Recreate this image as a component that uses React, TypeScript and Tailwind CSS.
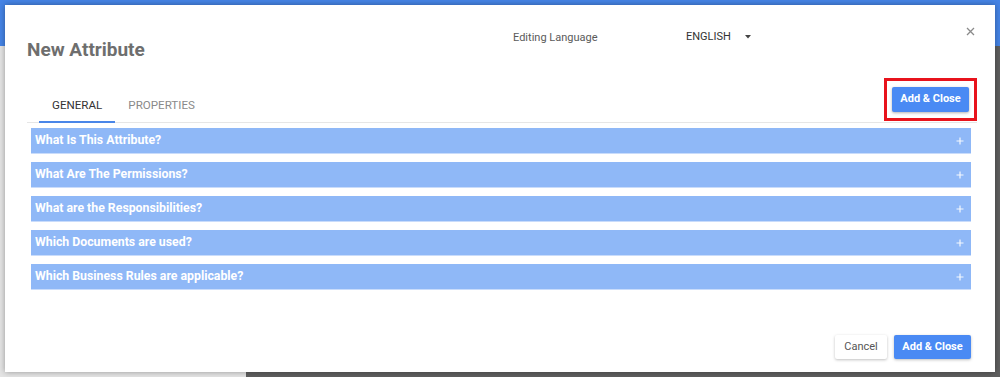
import React from "react";

const sections = [
  "What Is This Attribute?",
  "What Are The Permissions?",
  "What are the Responsibilities?",
  "Which Documents are used?",
  "Which Business Rules are applicable?",
];

const PlusIcon = () => (
  <svg width="8" height="8" viewBox="0 0 8 8" className="opacity-90">
    <path d="M4 0.5v7M0.5 4h7" stroke="#ffffff" strokeWidth="1.2" />
  </svg>
);

const CloseIcon = () => (
  <svg width="9" height="9" viewBox="0 0 9 9">
    <path d="M1 1l7 7M8 1l-7 7" stroke="#8a8a8a" strokeWidth="1.3" />
  </svg>
);

export default function App() {
  return (
    <div className="relative w-[1000px] h-[377px] overflow-hidden font-['Roboto',sans-serif]">
      {/* page behind the dialog */}
      <div className="h-[46px] bg-[#4584e6]" />
      <div className="flex h-[331px]">
        <div className="w-[246px] bg-[#e4e4e4]" />
        <div className="flex-1 bg-[#5f5f5f]" />
      </div>

      {/* dialog */}
      <div className="absolute left-[5px] top-[5px] w-[990px] h-[367px] bg-white shadow-[0_0_6px_rgba(0,0,0,0.35)]">
        <div className="flex items-start h-[73px] pl-[22px]">
          <h1 className="w-[486px] mt-[33px] text-[19px] leading-[24px] font-bold text-[#6e6e6e]">
            New Attribute
          </h1>
          <div className="w-[173px] mt-[26px] text-[11px] leading-[14px] text-[#5a5a5a]">
            Editing Language
          </div>
          <div className="flex items-center mt-[25px] text-[11px] leading-[14px] text-[#333]">
            ENGLISH
            <svg width="6" height="4" viewBox="0 0 6 4" className="ml-[14px]">
              <path d="M0 0h6L3 3.5z" fill="#444" />
            </svg>
          </div>
          <button className="ml-auto mr-[20px] mt-[22px]">
            <CloseIcon />
          </button>
        </div>

        <div className="flex items-end mx-[22px] w-[950px] border-b border-[#e6e6e6]">
          <button className="ml-[12px] -mb-px h-[39px] pt-[6px] px-[13px] border-b-2 border-[#4a86e8] text-[11.6px] text-[#333]">
            GENERAL
          </button>
          <button className="-mb-px h-[39px] pt-[6px] px-[13px] border-b-2 border-transparent text-[11.6px] text-[#8a8a8a]">
            PROPERTIES
          </button>
          <div className="ml-auto mb-px border-[3px] border-[#e8131c] px-[5px] py-[6px]">
            <button className="block h-[25px] w-[77px] rounded-[2px] bg-[#4a8af4] text-[11px] font-bold text-white shadow-[0_1px_3px_rgba(0,0,0,0.3)]">
              Add &amp; Close
            </button>
          </div>
        </div>

        <div className="mt-[5px] ml-[26px] w-[940px] flex flex-col gap-[8px]">
          {sections.map((s) => (
            <div
              key={s}
              className="flex items-center justify-between h-[26px] pl-[4px] pr-[7px] bg-[#8fb8f7] border-b border-[#c9dcfb] text-[12.3px] font-bold text-white"
            >
              <span>{s}</span>
              <PlusIcon />
            </div>
          ))}
        </div>

        <div className="flex justify-end gap-[7px] mt-[45px] pr-[24px]">
          <button className="h-[24px] w-[52px] rounded-[2px] bg-white text-[11px] text-[#555] shadow-[0_1px_3px_rgba(0,0,0,0.25)]">
            Cancel
          </button>
          <button className="h-[24px] w-[77px] rounded-[2px] bg-[#4a8af4] text-[11px] font-bold text-white shadow-[0_1px_3px_rgba(0,0,0,0.25)]">
            Add &amp; Close
          </button>
        </div>
      </div>
    </div>
  );
}
